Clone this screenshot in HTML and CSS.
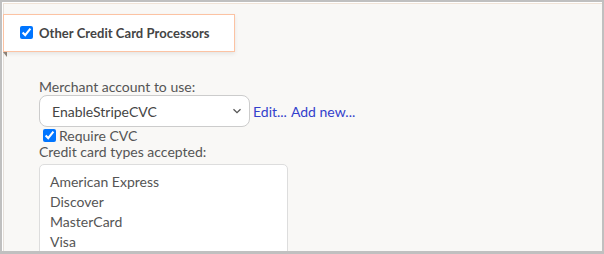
FILE: index.html
```html
<!DOCTYPE html>
<html lang="en">
<head>
  <meta charset="UTF-8" />
  <title>Payment Settings</title>
  <link rel="stylesheet" href="styles.css">
</head>
<body>
  <div class="window">
    <div class="panel">

      <!-- section ribbon -->
      <div class="section-head">
        <label class="head-label">
          <input type="checkbox" checked>
          <span>Other Credit Card Processors</span>
        </label>
        <span class="fold"></span>
      </div>

      <div class="form">
        <div class="field-label">Merchant account to use:</div>
        <div class="select-row">
          <div class="select-box">
            <span>EnableStripeCVC</span>
            <svg class="chevron" width="10" height="6" viewBox="0 0 10 6">
              <path d="M1.5 1.2 L5 4.6 L8.5 1.2" fill="none" stroke="#555" stroke-width="1.3"/>
            </svg>
          </div>
          <a href="#" class="link">Edit...</a>
          <a href="#" class="link">Add new...</a>
        </div>

        <label class="check-row">
          <input type="checkbox" checked>
          <span>Require CVC</span>
        </label>

        <div class="field-label">Credit card types accepted:</div>
        <div class="list-box">
          <div class="list-item">American Express</div>
          <div class="list-item">Discover</div>
          <div class="list-item">MasterCard</div>
          <div class="list-item">Visa</div>
        </div>
      </div>

    </div>
  </div>
</body>
</html>
```

FILE: styles.css
```css
* {
  box-sizing: border-box;
  margin: 0;
  padding: 0;
}

body {
  font-family: Lato, 'Liberation Sans', sans-serif;
  background: #c0c0c0;
  color: #555;
}

/* ===== OUTER FRAME ===== */
.window {
  width: 604px;
  height: 254px;
  padding: 2px 2px 3px 2px;
  overflow: hidden;
}

.panel {
  height: 100%;
  background: #f9f8f6;
  border-top: 1px solid #fff;
  border-left: 1px solid #fff;
  box-shadow: inset 0 1px 0 #f1e4d8, inset 1px 0 0 #e6e0da;
  overflow: hidden;
}

/* ===== SECTION HEADER ===== */
.section-head {
  position: relative;
  width: 232px;
  height: 38px;
  margin-top: 11px;
  background: #fff;
  border: 1px solid #fcc3a3;
  box-shadow: 0 2px 4px rgba(0,0,0,0.08);
  display: flex;
  align-items: center;
  padding-left: 12px;
}

.head-label {
  display: flex;
  align-items: center;
  font-size: 13px;
  font-weight: bold;
  color: #444;
  letter-spacing: 0.05px;
}

.head-label input {
  margin: 0 6px 2px 4px;
  width: 13px;
  height: 13px;
}

.fold {
  position: absolute;
  left: -1px;
  bottom: -6px;
  width: 0;
  height: 0;
  border-top: 5px solid #8c8177;
  border-left: 4px solid transparent;
}

/* ===== FORM ===== */
.form {
  padding: 26px 0 0 36px;
  font-size: 14px;
}

.field-label {
  line-height: 17px;
}

.select-row {
  display: flex;
  align-items: center;
  gap: 4px;
}

.select-box {
  width: 211px;
  height: 32px;
  background: #fff;
  border: 1px solid #ccc;
  border-radius: 8px;
  display: flex;
  align-items: center;
  justify-content: space-between;
  padding: 0 7px 0 12px;
  font-size: 14px;
  color: #444;
}

.chevron {
  display: block;
}

.link {
  color: #3340cc;
  text-decoration: none;
  font-size: 14px;
}

.select-row .select-box + .link {
  margin-left: -1px;
}

.check-row {
  display: flex;
  align-items: center;
  height: 16px;
}

.check-row input {
  margin: 0 3px 0 4px;
  width: 13px;
  height: 13px;
}

.list-box {
  width: 249px;
  height: 120px;
  margin-top: 4px;
  background: #fff;
  border: 1px solid #ddd;
  border-radius: 5px;
  padding: 7px 0 0 10px;
}

.list-item {
  line-height: 20px;
}
```
